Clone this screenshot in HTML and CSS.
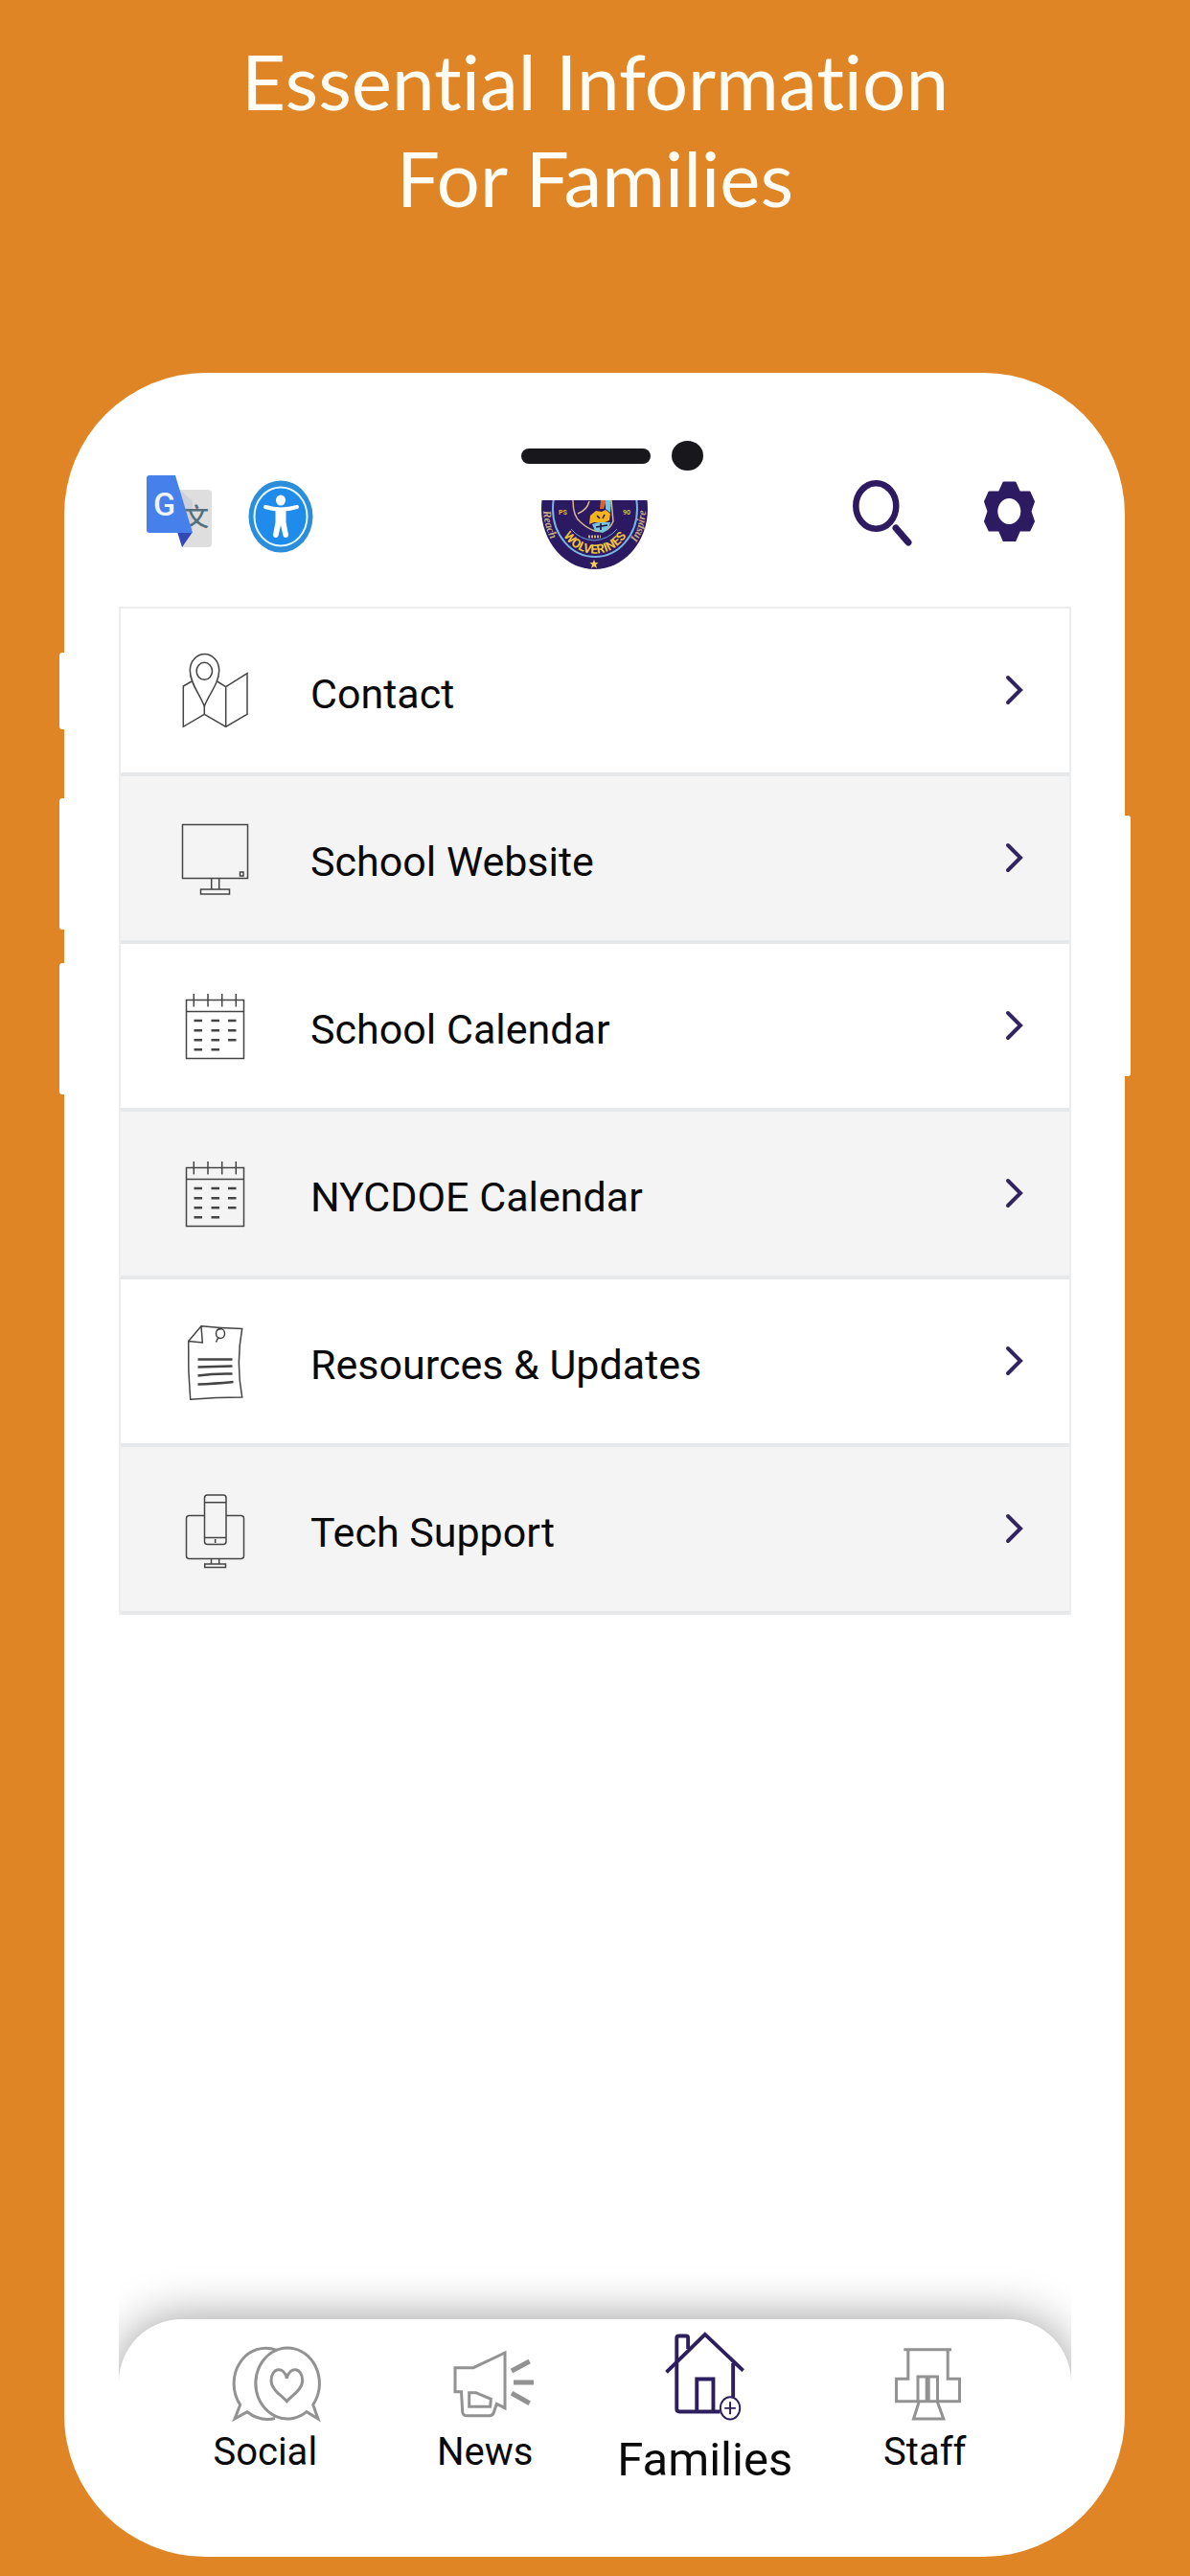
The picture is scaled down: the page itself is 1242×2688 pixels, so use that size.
FILE: index.html
```html
<!DOCTYPE html>
<html lang="en">
<head>
    <meta charset="UTF-8">
    <meta name="viewport" content="width=device-width, initial-scale=1.0">
    <title>Essential Information For Families</title>
    <link rel="stylesheet" href="styles.css">
</head>
<body>
    <h1>Essential Information<br>For Families</h1>

    <div class="phone">
        <div class="side-buttons left">
            <span class="side-button small"></span>
            <span class="side-button"></span>
            <span class="side-button"></span>
        </div>
        <div class="side-buttons right">
            <span class="side-button tall"></span>
        </div>

        <div class="sensors">
            <span class="speaker"></span>
            <span class="camera"></span>
        </div>

        <div class="screen">
            <header class="topbar">
                <div class="tools">
                    <button aria-label="Translate">
                        <svg width="68" height="100" viewBox="0 0 68 100">
                            <path d="M32 16H64Q68 16 68 20V72Q68 76 64 76H37Z" fill="#dedede"/>
                            <path d="M35 16L48 28V61L37 76Z" fill="#cdd0d8"/>
                            <text x="39" y="54" class="han">文</text>
                            <path d="M32 60H48L37 76Z" fill="#3347b5"/>
                            <path d="M3 1H30L48 61H3Q0 61 0 58V4Q0 1 3 1Z" fill="#4680ea"/>
                            <text x="7" y="43" class="letter-g">G</text>
                        </svg>
                    </button>
                    <button aria-label="Accessibility">
                        <svg width="68" height="100" viewBox="0 0 68 100">
                            <ellipse cx="34" cy="44" rx="33.500" ry="37.500" fill="#2c8edb"/>
                            <ellipse cx="34" cy="44" rx="27.500" ry="30.500" fill="#1f8ceb" stroke="#e8f8ff" stroke-width="2"/>
                            <ellipse cx="34" cy="27" rx="5" ry="5.500" fill="#fff"/>
                            <path d="M18 34Q34 39 51 34" fill="none" stroke="#fff" stroke-width="4" stroke-linecap="round"/>
                            <path d="M28.500 35H39.500V50L42 63Q42 66 39 66Q37 66 36.500 64L34 53L31.500 64Q31 66 29 66Q26 66 26 63L28.500 50Z" fill="#fff"/>
                        </svg>
                    </button>
                </div>

                <svg class="logo" width="112" height="100" viewBox="0 0 112 100" role="img" aria-label="PS 90 Wolverines">
                    <defs>
                        <clipPath id="crest"><rect x="0" y="27" width="112" height="73"/></clipPath>
                        <path id="arcName" d="M18 54A41 46 0 0 0 94 54"/>
                        <path id="arcOuter" d="M2 36A53.500 61 0 0 0 109 36"/>
                    </defs>
                    <g clip-path="url(#crest)">
                        <ellipse cx="55.500" cy="36" rx="55.500" ry="63" fill="#2b1a62"/>
                        <ellipse cx="56" cy="36" rx="44" ry="50" fill="#2b1a62" stroke="#79b3e6" stroke-width="2"/>
                        <path d="M33 27Q33 44 41 50Q49 57 56 59Q70 62 75 49L73 27" fill="#2b1a62" stroke="#d8b98d" stroke-width="1.500"/>
                        <path d="M38 41Q48 37 50 28" fill="none" stroke="#d8b98d" stroke-width="1.500"/>
                        <path d="M62 27H68L65 36H61Z" fill="#e0632b"/>
                        <path d="M67 27H73L72 40L67 36Z" fill="#76c3e2"/>
                        <path d="M51 43L57 38L63 39L67 37L72 41L71 48L64 51L55 50L50 52Z" fill="#f3b51d"/>
                        <path d="M53 52L60 50L72 50Q71 58 64 61L56 59Z" fill="#79c4dc"/>
                        <path d="M58 43L61 46M66 42L64 46M57 55L69 53M62 51V58" stroke="#1b1338" stroke-width="1.500"/>
                        <path d="M31 57Q40 68 55 69Q70 68 79 57" fill="none" stroke="#6ea3db" stroke-width="1"/>
                        <path d="M49 65H62" stroke="#c0a983" stroke-width="3" stroke-dasharray="2 1"/>
                        <text x="18" y="42" class="crest-small">PS</text>
                        <text x="85" y="42" class="crest-small">90</text>
                        <text class="crest-name"><textPath href="#arcName" startOffset="50%" text-anchor="middle">WOLVERINES</textPath></text>
                        <text class="crest-motto"><textPath href="#arcOuter" startOffset="2">Reach</textPath></text>
                        <text class="crest-motto"><textPath href="#arcOuter" startOffset="99%" text-anchor="end">Inspire</textPath></text>
                        <path d="M55 89L56.300 92H59.500L57 94.300L58 98L55 96L52 98L53 94.300L50.500 92H53.700Z" fill="#f5cf52"/>
                    </g>
                </svg>

                <div class="tools actions">
                    <button aria-label="Search">
                        <svg width="62" height="100" viewBox="0 0 62 100" fill="none" stroke="#2d1b62">
                            <ellipse cx="24.300" cy="33" rx="21" ry="23.700" stroke-width="6.500"/>
                            <path d="M45 56L58 71" stroke-width="7" stroke-linecap="round"/>
                        </svg>
                    </button>
                    <button aria-label="Settings">
                        <svg width="54" height="100" viewBox="0 0 54 100">
                            <path fill="#2d1b62" fill-rule="evenodd" stroke="#2d1b62" stroke-width="2" stroke-linejoin="round" d="M21.500 8.500H33.500L38 18.500H48.500L53 28.500L49.500 38.500L53 49L48.500 58.500H38L33.500 69H21.500L17 58.500H6.500L2 49L5.500 38.500L2 28.500L6.500 18.500H17ZM27.300 24A13 14.500 0 1 0 27.300 53A13 14.500 0 1 0 27.300 24Z"/>
                        </svg>
                    </button>
                </div>
            </header>

            <main class="menu">
                <a class="row" href="#contact">
                    <svg class="icon" viewBox="0 0 72 80">
                        <path d="M25.300 57C21 45 10.300 33 10.300 19.500A15.200 17 0 0 1 40.700 19.500C40.700 33 29.600 45 25.300 57Z"/>
                        <ellipse cx="25.300" cy="20.300" rx="8.200" ry="9"/>
                        <path d="M12 31L3.300 36V78.300L25.300 65.300L47.700 78.300L70 65.300V22.700L47.700 36.700L38.700 31M47.700 36.700V78.300M25.300 57V65.300"/>
                    </svg>
                    <span>Contact</span>
                    <svg class="chevron" viewBox="0 0 20 32"><path d="M4 3L17 16L4 29"/></svg>
                </a>
                <a class="row" href="#website">
                    <svg class="icon" viewBox="0 0 72 80">
                        <path d="M2.500 5.500H70.500V61.500H2.500Z"/>
                        <path d="M32.700 61.500V73M40.700 61.500V73M21.500 73H51.500V78H21.500ZM62.500 55H66V59H62.500Z"/>
                    </svg>
                    <span>School Website</span>
                    <svg class="chevron" viewBox="0 0 20 32"><path d="M4 3L17 16L4 29"/></svg>
                </a>
                <a class="row" href="#school-calendar">
                    <svg class="icon" viewBox="0 0 72 80">
                        <path d="M6.500 13.500H66.500V74.500H6.500ZM6.500 25.500H66.500M14.300 7V20.500M29 7V20.500M43.700 7V20.500M58.300 7V20.500"/>
                        <path class="dashes" d="M14.500 35H23M32.500 35H41M50 35H58.500M14.500 45.300H23M32.500 45.300H41M50 45.300H58.500M14.500 55.300H23M32.500 55.300H41M50 55.300H58.500M14.500 65.300H23M32.500 65.300H41"/>
                    </svg>
                    <span>School Calendar</span>
                    <svg class="chevron" viewBox="0 0 20 32"><path d="M4 3L17 16L4 29"/></svg>
                </a>
                <a class="row" href="#nycdoe-calendar">
                    <svg class="icon" viewBox="0 0 72 80">
                        <path d="M6.500 13.500H66.500V74.500H6.500ZM6.500 25.500H66.500M14.300 7V20.500M29 7V20.500M43.700 7V20.500M58.300 7V20.500"/>
                        <path class="dashes" d="M14.500 35H23M32.500 35H41M50 35H58.500M14.500 45.300H23M32.500 45.300H41M50 45.300H58.500M14.500 55.300H23M32.500 55.300H41M50 55.300H58.500M14.500 65.300H23M32.500 65.300H41"/>
                    </svg>
                    <span>NYCDOE Calendar</span>
                    <svg class="chevron" viewBox="0 0 20 32"><path d="M4 3L17 16L4 29"/></svg>
                </a>
                <a class="row" href="#resources">
                    <svg class="icon" viewBox="0 0 72 80">
                        <path d="M8.700 19.500L22 3.800Q42 6 64.700 6.500Q58 42 64.700 78Q38 78 10.700 80.200Q8 50 8.700 19.500ZM22 3.800L23.300 21L8.700 19.500"/>
                        <ellipse cx="42" cy="11.500" rx="4.500" ry="5"/>
                        <path d="M37.500 20.500L40 15M38 8L44 6"/>
                        <path class="dashes" d="M18.500 38.500H54.500M18.500 46.500L54.500 45.500M18.500 55.500Q35 53 54.500 53.500M18.500 64.500Q35 64 55.500 62"/>
                    </svg>
                    <span>Resources &amp; Updates</span>
                    <svg class="chevron" viewBox="0 0 20 32"><path d="M4 3L17 16L4 29"/></svg>
                </a>
                <a class="row" href="#support">
                    <svg class="icon" viewBox="0 0 72 80">
                        <rect x="6.500" y="26.500" width="60" height="45" rx="3"/>
                        <rect class="cover" x="25.500" y="5" width="22.500" height="51.500" rx="3"/>
                        <path d="M25.500 12.700H48M25.500 49.500H48M36.700 51V55M32.500 71.500V77M40.700 71.500V77M25.700 77H47.500V80.500H25.700Z"/>
                    </svg>
                    <span>Tech Support</span>
                    <svg class="chevron" viewBox="0 0 20 32"><path d="M4 3L17 16L4 29"/></svg>
                </a>
            </main>

            <nav class="tabbar">
                <a class="tab" href="#social">
                    <svg viewBox="0 0 120 105">
                        <path d="M109.700 79.300A33.300 37 0 1 0 103 86.700L115 94Z"/>
                        <path d="M72 22.500A33.300 37 0 0 0 33.700 79.300L28 94L41 86.700Q54 97 70 93.500"/>
                        <path d="M82.300 51.700C79 38 66 41 66 54C66 63 76 69 82.300 75.700C88.600 69 98.700 63 98.700 54C98.700 41 86 38 82.300 51.700Z"/>
                    </svg>
                    <span>Social</span>
                </a>
                <a class="tab" href="#news">
                    <svg viewBox="0 0 120 105">
                        <path d="M29 40.700H48L81 25V82.700L72.300 78.300L69.500 87Q68.500 90.700 65 90.700H41Q37 90.700 36.700 86.700L35.500 65.700H29Z"/>
                        <path d="M43.700 66.700H50.700L66.300 73.300L65.700 81.300H43.700Z"/>
                        <path class="rays" d="M88 44L106.700 34M90 56H111M88 67.300L106.700 77.700"/>
                    </svg>
                    <span>News</span>
                </a>
                <a class="tab active" href="#families">
                    <svg viewBox="0 0 120 105">
                        <path d="M18.300 46.700L59.800 6L100.800 45"/>
                        <path d="M41.600 21.700V10Q41.600 7.700 39 7.700H32Q29.400 7.700 29.400 10V86Q29.400 89 32.500 89H76M90 36.700V73.500M51 89V54H68.700V89"/>
                        <g class="plus">
                            <ellipse cx="86.800" cy="85.300" rx="10.500" ry="12"/>
                            <path d="M80.800 85.300H92.800M86.800 78.500V92"/>
                        </g>
                    </svg>
                    <span>Families</span>
                </a>
                <a class="tab" href="#staff">
                    <svg viewBox="0 0 120 105">
                        <path d="M38.300 21.700H88M42.800 21.700V52.300H30.500V75.700H96.500V52.300H84.200V21.700"/>
                        <path d="M53 75.700V50H73.500V75.700M54 76.700L48.500 94H79.800L73.500 76.700"/>
                        <path class="rays" d="M63.200 50V75.700"/>
                    </svg>
                    <span>Staff</span>
                </a>
            </nav>
        </div>
    </div>
</body>
</html>
```
FILE: styles.css
```css
* {
    box-sizing: border-box;
}

body {
    font-family: Roboto, Arial, sans-serif;
    background-color: #e08525;
    color: #0a0a0a;
    display: flex;
    flex-direction: column;
    min-height: 100vh;
    margin: 0;
}

h1 {
    color: #fffdf5;
    font-family: Lato, sans-serif;
    font-size: 80px;
    font-variant-ligatures: none;
    font-weight: 400;
    line-height: 101px;
    text-align: center;
    margin: 34px 0 153px;
}

button {
    background: none;
    border: none;
    padding: 0;
    cursor: pointer;
}

svg {
    display: block;
}

a {
    color: inherit;
    text-decoration: none;
}

/* phone */

.phone {
    background: #fff;
    border-radius: 148px;
    display: flex;
    flex-direction: column;
    flex: 1;
    margin: 0 68px 20px 67px;
    padding: 71px 56px 66px 57px;
    position: relative;
}

.side-buttons {
    display: flex;
    flex-direction: column;
    gap: 35px;
    position: absolute;
    width: 8px;
}

.side-buttons.left {
    left: -5px;
    top: 292px;
}

.side-buttons.right {
    right: -6px;
    top: 462px;
}

.side-button {
    background: #fff;
    border-radius: 3px;
    height: 137px;
}

.side-button.small {
    height: 80px;
    margin-bottom: 37px;
}

.side-button.tall {
    height: 272px;
}

.sensors {
    display: flex;
    align-items: center;
    justify-content: center;
    gap: 22px;
    padding-left: 35px;
}

.speaker {
    background: #18171c;
    border-radius: 8px;
    width: 135px;
    height: 16px;
}

.camera {
    background: #18171c;
    border-radius: 50%;
    width: 33px;
    height: 31px;
}

.screen {
    display: flex;
    flex-direction: column;
    flex: 1;
    overflow: hidden;
}

/* top bar */

.topbar {
    display: grid;
    grid-template-columns: 1fr auto 1fr;
    padding: 4px 38px 38px 29px;
}

.tools {
    display: flex;
    gap: 38px;
}

.actions {
    gap: 74px;
    justify-content: flex-end;
}

.logo {
    margin-left: 8px;
}

.letter-g {
    fill: #eef3ff;
    font: 500 34px Roboto, sans-serif;
}

.han {
    fill: #56707a;
    font: 500 26px "Noto Sans CJK SC", sans-serif;
}

.crest-small {
    fill: #e5b93d;
    font: bold 7px Roboto, sans-serif;
}

.crest-name {
    fill: #f2c53d;
    font: bold 13px Roboto, sans-serif;
}

.crest-motto {
    fill: #c9ac85;
    font: italic bold 12px "Liberation Serif", serif;
}

/* menu */

.menu {
    border: 2px solid #ebedef;
    border-bottom: none;
}

.row {
    display: flex;
    align-items: center;
    background: #fff;
    border-bottom: 4px solid #e6e8ea;
    font-size: 43px;
    gap: 64px;
    height: 175px;
    padding: 0 48px 2px 62px;
}

.row:nth-child(even) {
    background: #f4f4f4;
}

.row span {
    flex: 1;
    padding-top: 8px;
}

.icon {
    fill: none;
    stroke: #444;
    stroke-width: 1.5;
    width: 72px;
    height: 80px;
    overflow: visible;
}

.icon .dashes {
    stroke-width: 2.5;
}

.icon .cover {
    fill: #f4f4f4;
}

.chevron {
    fill: none;
    stroke: #32255f;
    stroke-width: 4;
    stroke-linecap: round;
    width: 20px;
    height: 32px;
}

/* tab bar */

.tabbar {
    display: grid;
    grid-template-columns: repeat(4, 1fr);
    background: #fff;
    border-radius: 66px 66px 0 0;
    box-shadow: 0 0 50px rgba(0, 0, 0, 0.4);
    margin-top: auto;
    padding: 10px 38px 0;
}

.tab {
    display: flex;
    flex-direction: column;
    align-items: center;
    font-size: 40px;
    line-height: 48px;
    height: 172px;
}

.tab svg {
    fill: none;
    stroke: #929292;
    stroke-width: 3;
    width: 120px;
    height: 105px;
}

.tab .rays {
    stroke-width: 5;
}

.tab.active {
    font-size: 49px;
    line-height: 70px;
}

.tab.active svg {
    stroke: #2d1f5e;
    stroke-width: 4;
}

.tab .plus {
    fill: #fff;
    stroke-width: 2;
}
```
